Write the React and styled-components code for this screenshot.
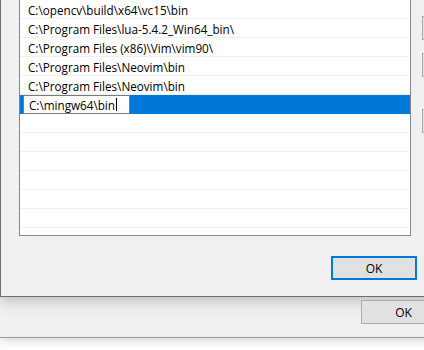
import styled, { createGlobalStyle } from "styled-components";

const GlobalStyle = createGlobalStyle`
  body {
    margin: 0;
    background: #ffffff;
    font-family: "Open Sans", sans-serif;
  }
`;

const paths = [
    "C:\\opencv\\build\\x64\\vc15\\bin",
    "C:\\Program Files\\lua-5.4.2_Win64_bin\\",
    "C:\\Program Files (x86)\\Vim\\vim90\\",
    "C:\\Program Files\\Neovim\\bin",
    "C:\\Program Files\\Neovim\\bin",
];

export default function App() {
    const empty = Array.from({ length: 7 });

    return (
        <>
            <GlobalStyle />
            <Screen>
                <BackWindow>
                    <Dialog>
                        <Body>
                            <PathList>
                                {paths.map((p, i) => (
                                    <Row key={i}>{p}</Row>
                                ))}
                                <Row $selected>
                                    <EditBox>
                                        C:\mingw64\bin<Caret />
                                    </EditBox>
                                </Row>
                                {empty.map((_, i) => (
                                    <Row key={"e" + i} />
                                ))}
                            </PathList>
                            {/* right-hand buttons, only their edge is on screen */}
                            <SideButtons>
                                <Button $top={17} />
                                <Button $top={13} />
                                <Button $top={32} />
                            </SideButtons>
                        </Body>
                        <Footer>
                            <Button $default>OK</Button>
                            <Button />
                        </Footer>
                    </Dialog>
                    <BackFooter>
                        <Button $narrow>OK</Button>
                    </BackFooter>
                </BackWindow>
            </Screen>
        </>
    );
}

const Screen = styled.div`
width: 424px;
height: 350px;
overflow: hidden;
`
const BackWindow = styled.div`
width: 460px;
margin-top: -12px;
background: #f0f0f0;
border-bottom: 1px solid #9c9c9c;
box-shadow: 0 3px 9px rgba(0, 0, 0, 0.16);
`
const Dialog = styled.div`
width: 520px;
box-sizing: border-box;
padding: 10px 0 16px 18px;
background: #f0f0f0;
border: 1px solid #6e6e6e;
box-shadow: 0 4px 13px rgba(0, 0, 0, 0.22);
`
const Body = styled.div`
display: flex;
gap: 11px;
align-items: flex-start;
`
const PathList = styled.div`
width: 392px;
height: 237px;
box-sizing: border-box;
border: 1px solid #828790;
background: #ffffff;
overflow: hidden;
`
const Row = styled.div`
display: flex;
align-items: flex-start;
height: ${(p) => (p.$selected ? "19px" : "18px")};
padding-left: ${(p) => (p.$selected ? "3px" : "8px")};
border-bottom: ${(p) => (p.$selected ? "none" : "1px solid #f0f0f0")};
margin: ${(p) => (p.$selected ? "0" : "0 1px 0 0")};
background: ${(p) => (p.$selected ? "#0078d7" : "transparent")};
font-size: 11.7px;
line-height: 20px;
color: #000000;
white-space: nowrap;
`
const EditBox = styled.div`
display: flex;
align-items: center;
width: 107px;
height: 19px;
box-sizing: border-box;
padding-left: 5px;
border: 1px solid #7a7a7a;
background: #ffffff;
font-size: 11.7px;
line-height: 16px;
color: #000000;
`
const Caret = styled.span`
display: inline-block;
width: 1px;
height: 13px;
margin-left: 1px;
background: #000000;
`
const SideButtons = styled.div`
display: flex;
flex-direction: column;
`
const Button = styled.div`
display: flex;
align-items: center;
justify-content: center;
flex-shrink: 0;
width: ${(p) => (p.$narrow ? "85px" : p.$default ? "86px" : "75px")};
height: 24px;
box-sizing: border-box;
margin-top: ${(p) => (p.$top ? p.$top + "px" : "0")};
background: #e1e1e1;
border: ${(p) => (p.$default ? "2px solid #0078d7" : "1px solid #adadad")};
font-size: 12px;
color: #000000;
`
const Footer = styled.div`
display: flex;
justify-content: flex-end;
gap: 9px;
padding: 20px 18px 0 0;
`
const BackFooter = styled.div`
display: flex;
justify-content: flex-end;
padding: 3px 14px 13px 0;
`
